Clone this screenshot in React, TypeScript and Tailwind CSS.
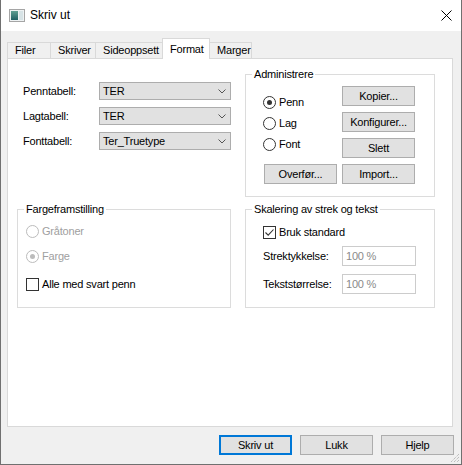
import React from "react";

const tabs = ["Filer", "Skriver", "Sideoppsett", "Format", "Marger"];
const tabWidths: Record<string, string> = {
  Filer: "w-[44px]",
  Skriver: "w-[46px]",
  Sideoppsett: "w-[68px]",
  Format: "w-[48px]",
  Marger: "w-[43px]",
};

function Chevron() {
  return (
    <svg width="8" height="5" viewBox="0 0 8 5">
      <path d="M0.5 0.5 L4 4 L7.5 0.5" fill="none" stroke="#555" strokeWidth="1" />
    </svg>
  );
}

function Combo({ value }: { value: string }) {
  return (
    <div className="flex h-[18px] w-[132px] shrink-0 items-center justify-between border border-[#adadad] bg-[#e1e1e1] pl-[3px] pr-[4px]">
      <span>{value}</span>
      <Chevron />
    </div>
  );
}

function Radio({ label, checked, disabled }: { label: string; checked?: boolean; disabled?: boolean }) {
  return (
    <div className={`flex h-[20px] items-center gap-[3px] ${disabled ? "text-[#a0a0a0]" : "text-black"}`}>
      <span
        className={`flex h-[13px] w-[13px] items-center justify-center rounded-full border bg-white ${
          disabled ? "border-[#bcbcbc]" : "border-[#333333]"
        }`}
      >
        {checked && (
          <span className={`h-[5px] w-[5px] rounded-full ${disabled ? "bg-[#bcbcbc]" : "bg-[#333333]"}`} />
        )}
      </span>
      <span>{label}</span>
    </div>
  );
}

function Check({ label, checked }: { label: string; checked?: boolean }) {
  return (
    <div className="flex h-[20px] items-center gap-[3px]">
      <span className="flex h-[13px] w-[13px] items-center justify-center border border-[#333333] bg-white">
        {checked && (
          <svg width="11" height="11" viewBox="0 0 11 11">
            <path d="M1.5 5.5 L4.2 8.2 L9.5 2.5" fill="none" stroke="#333" strokeWidth="1.1" />
          </svg>
        )}
      </span>
      <span>{label}</span>
    </div>
  );
}

function Btn({ children, primary }: { children: React.ReactNode; primary?: boolean }) {
  return (
    <div
      className={`flex h-[20px] w-[73px] items-center justify-center bg-[#e1e1e1] ${
        primary ? "border-2 border-[#0078d7]" : "border border-[#adadad]"
      }`}
    >
      {children}
    </div>
  );
}

function Group({ title, className, children }: { title: string; className?: string; children: React.ReactNode }) {
  return (
    <div className={`relative border border-[#dcdcdc] ${className ?? ""}`}>
      <span className="absolute -top-[7px] left-[6px] bg-white px-[2px] leading-[13px]">{title}</span>
      {children}
    </div>
  );
}

function Field({ label }: { label: string }) {
  return (
    <div className="flex items-center">
      <span className="w-[79px]">{label}</span>
      <div className="flex h-[20px] w-[74px] items-center border border-[#cccccc] bg-white pl-[3px] text-[#8a8a8a]">
        100 %
      </div>
    </div>
  );
}

export default function App() {
  return (
    <div className="relative flex h-[465px] w-[462px] flex-col border-x border-b border-[#707070] bg-[#f0f0f0] font-['Liberation_Sans',Arial,sans-serif] text-[11px] leading-[13px] tracking-[-0.2px] text-black">
      {/* Tittellinje */}
      <div className="flex h-[31px] shrink-0 items-center bg-white pl-[8px] pr-[9px]">
        <svg width="16" height="13" viewBox="0 0 16 13">
          <defs>
            <linearGradient id="ic" x1="0" y1="0" x2="0" y2="1">
              <stop offset="0" stopColor="#5f9f92" />
              <stop offset="1" stopColor="#1f5f63" />
            </linearGradient>
          </defs>
          <rect x="0.5" y="0.5" width="15" height="12" fill="#eef2f3" stroke="#a5a5a5" />
          <rect x="2" y="2" width="7" height="9" fill="url(#ic)" />
          <rect x="10" y="2" width="4" height="9" fill="#d7e3e6" />
        </svg>
        <span className="ml-[5px] text-[12px] tracking-normal">Skriv ut</span>
        <svg className="ml-auto" width="11" height="11" viewBox="0 0 11 11">
          <path d="M0.5 0.5 L10.5 10.5 M10.5 0.5 L0.5 10.5" stroke="#000" strokeWidth="1" />
        </svg>
      </div>

      {/* Faner */}
      <div className="ml-[6px] mt-[7px] flex h-[20px] items-end">
        {tabs.map((t, i) => {
          const active = t === "Format";
          return (
            <div
              key={t}
              className={`flex items-center border border-b-0 border-[#d9d9d9] ${tabWidths[t]} ${
                i > 0 ? "-ml-px" : ""
              } ${active ? "relative z-10 -mb-px h-[21px] bg-white pl-[7px]" : "h-[16px] bg-[#f0f0f0] pl-[7px]"}`}
            >
              {t}
            </div>
          );
        })}
      </div>

      {/* Panel */}
      <div className="ml-[6px] h-[369px] w-[446px] border border-[#d9d9d9] bg-white pl-[9px] pt-[15px]">
        <div className="grid grid-cols-[214px_190px] grid-rows-[123px_99px] gap-x-[14px] gap-y-[12px]">
          {/* Tabeller */}
          <div className="flex flex-col gap-[7px] pl-[6px] pt-[8px]">
            {[
              ["Penntabell:", "TER"],
              ["Lagtabell:", "TER"],
              ["Fonttabell:", "Ter_Truetype"],
            ].map(([label, value]) => (
              <div key={label} className="flex items-center">
                <span className="w-[78px]">{label}</span>
                <Combo value={value} />
              </div>
            ))}
          </div>

          <Group title="Administrere" className="pl-[17px] pt-[11px]">
            <div className="flex">
              <div className="flex w-[79px] flex-col gap-px pt-[6px]">
                <Radio label="Penn" checked />
                <Radio label="Lag" />
                <Radio label="Font" />
              </div>
              <div className="flex flex-col gap-[6px]">
                <Btn>Kopier...</Btn>
                <Btn>Konfigurer...</Btn>
                <Btn>Slett</Btn>
              </div>
            </div>
            <div className="mt-[6px] flex gap-[5px] pl-px">
              <Btn>Overfør...</Btn>
              <Btn>Import...</Btn>
            </div>
          </Group>

          <Group title="Fargeframstilling" className="pl-[8px] pt-[11px]">
            <div className="flex flex-col gap-[5px]">
              <Radio label="Gråtoner" disabled />
              <Radio label="Farge" checked disabled />
            </div>
            <div className="mt-[8px]">
              <Check label="Alle med svart penn" />
            </div>
          </Group>

          <Group title="Skalering av strek og tekst" className="pl-[17px] pt-[12px]">
            <Check label="Bruk standard" checked />
            <div className="mt-[4px] flex flex-col gap-[8px]">
              <Field label="Strektykkelse:" />
              <Field label="Tekststørrelse:" />
            </div>
          </Group>
        </div>
      </div>

      {/* Knapper */}
      <div className="mt-[8px] flex justify-end gap-[8px] pr-[7px]">
        <Btn primary>Skriv ut</Btn>
        <Btn>Lukk</Btn>
        <Btn>Hjelp</Btn>
      </div>

      {/* Størrelsesgrep */}
      <svg className="absolute bottom-[1px] right-[1px]" width="12" height="12" viewBox="0 0 12 12">
        <path d="M11 3 L3 11 M11 6 L6 11 M11 9 L9 11" stroke="#a8a8a8" strokeWidth="1" strokeDasharray="1 1" />
      </svg>
    </div>
  );
}
